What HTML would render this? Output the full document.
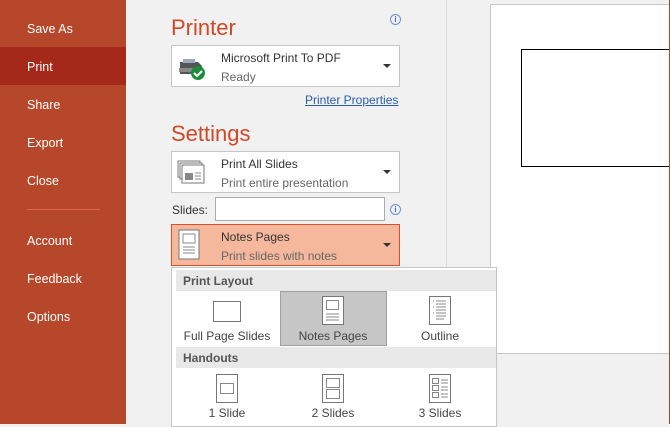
<!DOCTYPE html>
<html><head><style>
*{margin:0;padding:0;box-sizing:border-box}
body{width:670px;height:424px;overflow:hidden;position:relative;background:#f1f1f1;font-family:"Liberation Sans",sans-serif;font-size:12px;color:#444}
.a{position:absolute}
.nav{left:0;top:0;width:126px;height:424px;background:#b7472a}
.nav div{position:absolute;left:27px;color:#fff;font-size:12.5px}
.box{position:absolute;left:171px;width:229px;height:42px;border:1px solid #c6c6c6;background:#fff}
.box .t1{position:absolute;left:49px;top:5px;font-size:12px;color:#333}
.box .t2{position:absolute;left:49px;top:24px;font-size:12px;color:#666}
.caret{position:absolute;right:8px;top:18px;width:0;height:0;border-left:4px solid transparent;border-right:4px solid transparent;border-top:4px solid #333}
h1{position:absolute;left:171px;font-weight:normal;font-size:22px;color:#d24726}
.hd{position:absolute;left:4px;width:320px;height:21px;background:#e8e8e8;font-weight:bold;color:#555;padding:4px 7px;font-size:12px}
.lbl{position:absolute;width:106px;text-align:center;color:#444;font-size:12px}
.info{position:absolute;width:11px;height:11px;border:1px solid #6b8fd6;border-radius:50%;color:#3f6fd0;font-size:8px;text-align:center;line-height:9px;font-weight:bold}
</style></head><body>
<div class="a nav">
<div class="a" style="left:0;top:47px;width:126px;height:38px;background:#a4291a"></div>
<div style="top:22px">Save As</div>
<div style="top:60px">Print</div>
<div style="top:98px">Share</div>
<div style="top:136px">Export</div>
<div style="top:174px">Close</div>
<div style="top:209px;width:73px;height:1px;background:#e0654a"></div>
<div style="top:234px">Account</div>
<div style="top:272px">Feedback</div>
<div style="top:310px">Options</div>
</div>
<div class="a" style="left:446px;top:0;width:1px;height:424px;background:#dcdcdc"></div>
<div class="a" style="left:490px;top:4px;width:180px;height:350px;background:#fff;border:1px solid #c6c6c6;border-right:none"></div>
<div class="a" style="left:521px;top:49px;width:149px;height:118px;border:1px solid #000;border-right:none"></div>
<div class="a" style="left:669px;top:0;width:1px;height:424px;background:#b7472a"></div>

<h1 style="top:15px">Printer</h1>
<div class="info" style="left:390px;top:14px">i</div>
<div class="box" style="top:45px">
<svg class="a" style="left:5px;top:10px" width="32" height="26" viewBox="0 0 32 26"><path d="M3 6h18l4 4v8H3z" fill="#555"/><path d="M6 3h12v4H6z" fill="#9ab"/><rect x="2" y="12" width="20" height="4" fill="#888"/><circle cx="21" cy="17" r="7" fill="#1e8c3a"/><path d="M17 17l3 3 5-5" stroke="#fff" stroke-width="2" fill="none"/></svg>
<div class="t1">Microsoft Print To PDF</div><div class="t2">Ready</div><div class="caret"></div></div>
<div class="a" style="left:305px;top:93px;color:#2a5ea8;text-decoration:underline;font-size:12px">Printer Properties</div>

<h1 style="top:121px">Settings</h1>
<div class="box" style="top:151px">
<svg class="a" style="left:5px;top:8px" width="30" height="28" viewBox="0 0 30 28"><g fill="#fff" stroke="#777"><rect x="1" y="1" width="22" height="16"/><rect x="3" y="3" width="22" height="16"/><rect x="5" y="5" width="22" height="18"/></g><rect x="8" y="13" width="8" height="7" fill="#888"/><path d="M18 13h6M18 16h6M18 19h6" stroke="#888"/></svg>
<div class="t1">Print All Slides</div><div class="t2">Print entire presentation</div><div class="caret"></div></div>
<div class="a" style="left:172px;top:203px;font-size:12px;color:#333">Slides:</div>
<div class="a" style="left:215px;top:197px;width:170px;height:24px;border:1px solid #ababab;background:#fff"></div>
<div class="info" style="left:390px;top:204px">i</div>
<div class="box" style="top:224px;background:#f5b89c;border-color:#d35230">
<svg class="a" style="left:6px;top:4px" width="22" height="32" viewBox="0 0 22 32"><rect x="1" y="1" width="20" height="29" fill="#fff" stroke="#777"/><rect x="5" y="5" width="12" height="9" fill="none" stroke="#888"/><path d="M5 18h12M5 21h12M5 24h12" stroke="#888"/></svg>
<div class="t1">Notes Pages</div><div class="t2">Print slides with notes</div><div class="caret"></div></div>

<div class="a" style="left:171px;top:267px;width:326px;height:160px;background:#fff;border:1px solid #c6c6c6">
<div class="hd" style="top:2px">Print Layout</div>
<div class="a" style="left:108px;top:23px;width:107px;height:55px;background:#c6c6c6;border:1px solid #a0a0a0"></div>
<svg class="a" style="left:41px;top:33px" width="28" height="21"><rect x="0.5" y="0.5" width="27" height="20" fill="#fff" stroke="#777"/></svg>
<svg class="a" style="left:150px;top:28px" width="22" height="30"><rect x="0.5" y="0.5" width="21" height="28" fill="#fff" stroke="#777"/><rect x="4.5" y="4.5" width="12" height="9" fill="none" stroke="#888"/><path d="M4 18h13M4 21h13M4 24h13" stroke="#888"/></svg>
<svg class="a" style="left:257px;top:28px" width="22" height="30"><rect x="0.5" y="0.5" width="21" height="28" fill="#fff" stroke="#777"/><path d="M7 5h10M7 8h10M7 11h10M7 14h10M7 17h10M7 20h10M7 23h8M4 5h1M4 11h1M4 17h1" stroke="#888"/></svg>
<div class="lbl" style="left:2px;top:61px">Full Page Slides</div>
<div class="lbl" style="left:108px;top:61px">Notes Pages</div>
<div class="lbl" style="left:215px;top:61px">Outline</div>
<div class="hd" style="top:79px">Handouts</div>
<svg class="a" style="left:44px;top:106px" width="22" height="30"><rect x="0.5" y="0.5" width="21" height="28" fill="#fff" stroke="#777"/><rect x="4.5" y="9.5" width="13" height="10" fill="none" stroke="#888"/></svg>
<svg class="a" style="left:150px;top:106px" width="22" height="30"><rect x="0.5" y="0.5" width="21" height="28" fill="#fff" stroke="#777"/><rect x="4.5" y="4.5" width="13" height="9" fill="none" stroke="#888"/><rect x="4.5" y="15.5" width="13" height="9" fill="none" stroke="#888"/></svg>
<svg class="a" style="left:257px;top:106px" width="22" height="30"><rect x="0.5" y="0.5" width="21" height="28" fill="#fff" stroke="#777"/><rect x="3.5" y="4.5" width="6" height="5" fill="none" stroke="#888"/><rect x="3.5" y="11.5" width="6" height="5" fill="none" stroke="#888"/><rect x="3.5" y="18.5" width="6" height="5" fill="none" stroke="#888"/><path d="M12 6h7M12 9h7M12 13h7M12 16h7M12 20h7M12 23h7" stroke="#888"/></svg>
<div class="lbl" style="left:2px;top:138px">1 Slide</div>
<div class="lbl" style="left:108px;top:138px">2 Slides</div>
<div class="lbl" style="left:215px;top:138px">3 Slides</div>
</div>
</body></html>
